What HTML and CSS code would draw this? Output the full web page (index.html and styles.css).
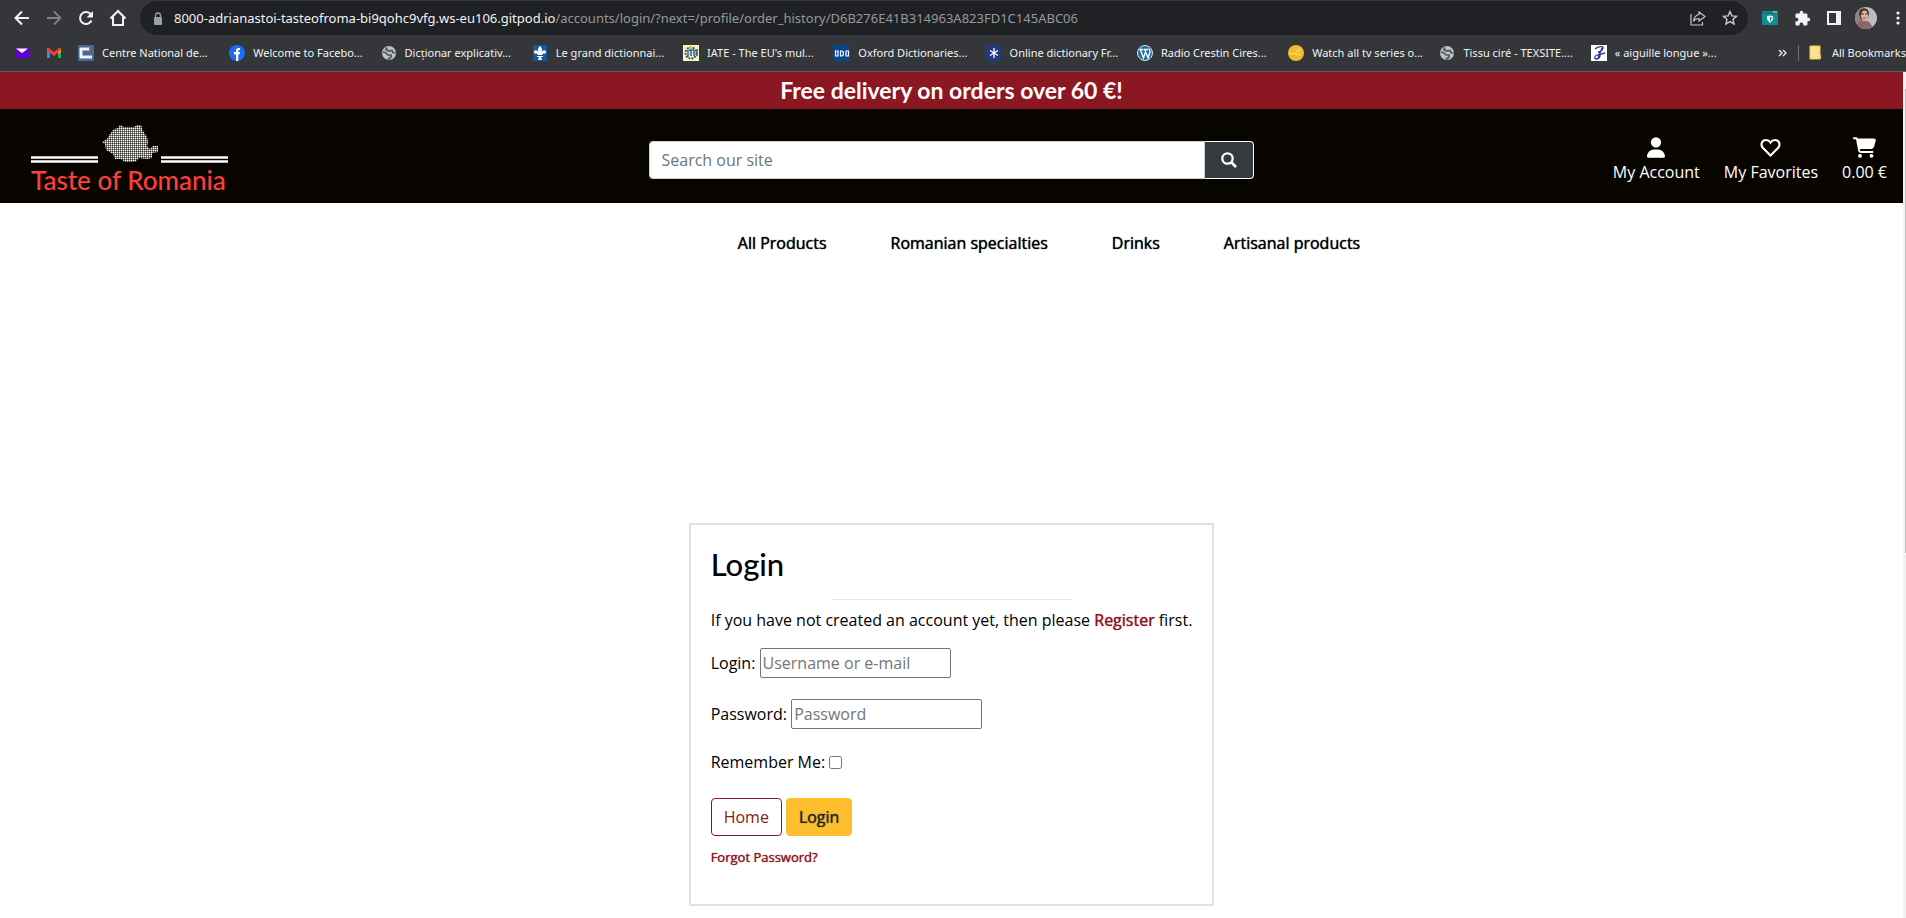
FILE: index.html
```html
<!DOCTYPE html>
<html lang="en">
<head>
<meta charset="utf-8">
<title>Taste of Romania</title>
<link rel="stylesheet" href="styles.css">
</head>
<body>
<div class="browser">
  <div class="toolbar">
    <button class="tool" aria-label="Back"><svg width="16" height="16" viewBox="0 0 16 16"><path d="M15 8H2M8 1.500L1.500 8 8 14.500" fill="none" stroke="#f1f3f4" stroke-width="2"/></svg></button>
    <button class="tool" aria-label="Forward"><svg width="16" height="16" viewBox="0 0 16 16"><path d="M1 8h13M8 1.500L14.500 8 8 14.500" fill="none" stroke="#808286" stroke-width="1.800"/></svg></button>
    <button class="tool" aria-label="Reload"><svg width="16" height="16" viewBox="0 0 16 16"><path d="M13.500 10.500A6 6 0 1 1 12.300 3.800L14 5.500" fill="none" stroke="#f1f3f4" stroke-width="2"/><path d="M15 1v6.500H8.500z" fill="#f1f3f4"/></svg></button>
    <button class="tool" aria-label="Home"><svg width="18" height="18" viewBox="0 0 18 18"><path d="M1.500 9.500L9 2l7.500 7.500M4 8v8h10V8" fill="none" stroke="#f1f3f4" stroke-width="2"/></svg></button>
    <div class="address">
      <svg class="lock" width="10" height="13" viewBox="0 0 10 13"><rect x="1" y="5" width="8" height="8" rx="1" fill="#9aa0a6"/><path d="M2.500 5V3.500a2.500 2.500 0 0 1 5 0V5" fill="none" stroke="#9aa0a6" stroke-width="1.300"/></svg>
      <div class="url" role="textbox" aria-label="Address">8000-adrianastoi-tasteofroma-bi9qohc9vfg.ws-eu106.gitpod.io<span class="path">/accounts/login/?next=/profile/order_history/D6B276E41B314963A823FD1C145ABC06</span></div>
      <button class="tool" aria-label="Share"><svg width="16" height="16" viewBox="0 0 16 16"><path d="M1 4v11h11.500v-3M9 2l6 4.500L9 11V8.500C6 8.500 4.500 9.500 3.500 11.500 4 7.500 6 5 9 4.500z" fill="none" stroke="#c4c7c9" stroke-width="1.200"/></svg></button>
      <button class="tool" aria-label="Bookmark this page"><svg width="16" height="16" viewBox="0 0 16 16"><path d="M8 1.500l1.900 4.400 4.700.4-3.600 3.100 1.100 4.700L8 11.600l-4.100 2.500L5 9.400 1.400 6.300l4.700-.4z" fill="none" stroke="#c4c7c9" stroke-width="1.400"/></svg></button>
    </div>
    <button class="tool" aria-label="Ad blocker"><svg width="16" height="14" viewBox="0 0 16 14"><rect width="16" height="14" fill="#138b95"/><path d="M0 2h16" stroke="#1b5d68"/><path d="M11 1h4" stroke="#b9e4e5"/><path d="M5 5l3-.5 3 .5v3.500L8 12 5 8.500z" fill="#e6f4f2"/><path d="M8 6v4.500L9.500 8V6z" fill="#138b95"/></svg></button>
    <button class="tool" aria-label="Extensions"><svg width="17" height="17" viewBox="0 0 24 24"><path d="M20.500 11H19V7a2 2 0 0 0-2-2h-4V3.500a2.500 2.500 0 0 0-5 0V5H4a2 2 0 0 0-2 2v3.800h1.500a2.700 2.700 0 0 1 0 5.400H2V20a2 2 0 0 0 2 2h3.800v-1.500a2.700 2.700 0 0 1 5.400 0V22H17a2 2 0 0 0 2-2v-4h1.500a2.500 2.500 0 0 0 0-5z" fill="#f1f3f4"/></svg></button>
    <button class="tool" aria-label="Side panel"><svg width="14" height="14" viewBox="0 0 14 14"><path d="M0 0h14v14H0zM2 2v10h7V2z" fill="#f1f3f4" fill-rule="evenodd"/></svg></button>
    <button class="tool" aria-label="Profile"><svg width="22" height="22" viewBox="0 0 22 22"><clipPath id="face"><circle cx="11" cy="11" r="11"/></clipPath><g clip-path="url(#face)"><path d="M0 0h22v22H0z" fill="#b9bdbb"/><path d="M0 0h7v22H0z" fill="#8e8480"/><path d="M4 7c0-7 9-8 10-1l-1 5-7 2z" fill="#49322c"/><ellipse cx="9.500" cy="8.500" rx="3.500" ry="5" fill="#e2b6a3"/><path d="M6 7h3M10 7h3" stroke="#433836"/><path d="M8 11h3" stroke="#a43a43"/><path d="M1 22c0-8 5-9 8-8 4-1 7 2 9 8z" fill="#95636b"/></g></svg></button>
    <button class="tool menu" aria-label="Menu"><svg width="4" height="14" viewBox="0 0 4 14"><g fill="#f1f3f4"><circle cx="2" cy="2" r="1.600"/><circle cx="2" cy="7" r="1.600"/><circle cx="2" cy="12" r="1.600"/></g></svg></button>
  </div>
  <nav class="bookmarks" aria-label="Bookmarks">
    <a class="mark short" href="#" aria-label="Mail"><svg width="16" height="16" viewBox="0 0 16 16"><path d="M1 3h14v10H1z" fill="#5f01d1"/><path d="M2 3.500h12L8 8z" fill="#fff"/></svg></a>
    <a class="mark short" href="#" aria-label="Gmail"><svg width="16" height="16" viewBox="0 0 16 16"><path d="M1 4h3v9H1z" fill="#4285f4"/><path d="M12 4h3v9h-3z" fill="#34a853"/><path d="M12 4l3-1v4l-3 2z" fill="#fbbc04"/><path d="M1 3l2 0 5 4 5-4h2v2L8 11 1 5.500z" fill="#ea4335"/></svg></a>
    <div class="marklist">
      <a class="mark" href="#"><svg width="16" height="16" viewBox="0 0 16 16"><path d="M0 0h16v16H0z" fill="#44699c"/><path d="M12 4H3v8h11" fill="none" stroke="#f2f2f2" stroke-width="3" stroke-linejoin="round"/><path d="M11 2.500h3v3h-3z" fill="#d54343"/></svg>Centre National de...</a>
      <a class="mark" href="#"><svg width="16" height="16" viewBox="0 0 16 16"><circle cx="8" cy="8" r="8" fill="#1b6ef3"/><path d="M7 16V9.500H5V7h2V5.500C7 3.500 8 2.700 11 3v2C9.500 5 9.300 5.300 9.300 7H11l-.4 2.500H9.300V16z" fill="#fff"/></svg>Welcome to Facebo...</a>
      <a class="mark" href="#"><svg width="16" height="16" viewBox="0 0 16 16"><circle cx="8" cy="8" r="7" fill="#bdc1c6"/><path d="M2 7l3 1 2 2 3 0 0 2-3 2.500M6 2.500L5 4.500 8 6l3-.5 1 2 2.500.5" fill="none" stroke="#515458" stroke-width="1.700"/></svg>Dicționar explicativ...</a>
      <a class="mark" href="#"><svg width="16" height="16" viewBox="0 0 16 16"><path d="M1 0h14v16H1z" fill="#15599b"/><path d="M8 1c3 3 2 5 1 7 1-3 5-4 5-1 0 2-2 2-2 1l-2 2H6L4 8c0 1-2 1-2-1 0-3 4-2 5 1C6 6 5 4 8 1zM5 11h6v1H9l1 3H6l1-3H5z" fill="#fff"/></svg>Le grand dictionnai...</a>
      <a class="mark" href="#"><svg width="16" height="16" viewBox="0 0 16 16"><path d="M0 0h16v16H0z" fill="#fbf7bd"/><circle cx="8" cy="8" r="5.500" fill="none" stroke="#315c91" stroke-width="2" stroke-dasharray="2 1"/><path d="M5 5v7M6 5h5M8 5v6M11 5v6M14 4v7" stroke="#315c91" stroke-width="1.500"/><path d="M6 1h3v2H6z" fill="#e4c929"/></svg>IATE - The EU's mul...</a>
      <a class="mark" href="#"><svg width="16" height="16" viewBox="0 0 16 16"><path d="M0 0h16v16H0z" fill="#07478e"/><path d="M1.500 6h2.500v5H1.500zM6.500 6H8l1.300 1v3L8 11H6.500zM12 6h2.500v5H12z" fill="none" stroke="#fff" stroke-width="1.200"/></svg>Oxford Dictionaries...</a>
      <a class="mark" href="#"><svg width="16" height="16" viewBox="0 0 16 16"><rect width="15" height="16" rx="2" fill="#213a79"/><path d="M8 3v10M4 5.500l8 5M12 5.500l-8 5" stroke="#fff" stroke-width="1.300"/></svg>Online dictionary Fr...</a>
      <a class="mark" href="#"><svg width="16" height="16" viewBox="0 0 16 16"><circle cx="8" cy="8" r="7.500" fill="#16739f" stroke="#d7e7ee"/><path d="M2.500 4.500h4M3.500 5l3 8L8.500 7M7 4.500h4M8 5l3 8 2-6c.5-2-1-2-1-3.500" fill="none" stroke="#fff" stroke-width="1.400"/></svg>Radio Crestin Cires...</a>
      <a class="mark" href="#"><svg width="16" height="16" viewBox="0 0 16 16"><circle cx="8" cy="8" r="8" fill="#f4b92a"/><path d="M1 8l2 1 2-1 2 1 4-5M7 9l4 1 2-2M9 7l4-3" fill="none" stroke="#fff0ba" stroke-dasharray="2 1"/></svg>Watch all tv series o...</a>
      <a class="mark" href="#"><svg width="16" height="16" viewBox="0 0 16 16"><circle cx="8" cy="8" r="7" fill="#bdc1c6"/><path d="M2 7l3 1 2 2 3 0 0 2-3 2.500M6 2.500L5 4.500 8 6l3-.5 1 2 2.500.5" fill="none" stroke="#515458" stroke-width="1.700"/></svg>Tissu ciré - TEXSITE....</a>
      <a class="mark" href="#"><svg width="16" height="16" viewBox="0 0 16 16"><path d="M0 0h16v16H0z" fill="#fff"/><path d="M4 4c3-3 9-3 8-1-1 3-3 4-5 4 3 0 3 6-1 7-3 0-3-3 0-4l8-2M11 3L7 13" fill="none" stroke="#2b3b97" stroke-width="1.300"/></svg>« aiguille longue »...</a>
    </div>
    <button class="more" aria-label="More bookmarks"><svg width="9" height="8" viewBox="0 0 9 8"><path d="M1 1l3 3-3 3M5 1l3 3-3 3" fill="none" stroke="#e8eaed" stroke-width="1.400"/></svg></button>
    <a class="mark all" href="#"><svg width="13" height="15" viewBox="0 0 13 15"><path d="M1 1h10v13H1z" fill="#fde293" stroke="#f5cc52"/><path d="M10 10h2v4h-2z" fill="#f5cc52"/></svg>All Bookmarks</a>
  </nav>
</div>
<div class="viewport">
  <div class="page">
    <div class="banner">Free delivery on orders over 60 €!</div>
    <header class="header">
      <a class="logo" href="#" aria-label="Taste of Romania">
        <svg width="197" height="40" viewBox="0 0 197 40"><defs><pattern id="dots" width="2" height="2" patternUnits="userSpaceOnUse"><path d="M0 0h2v2H0z" fill="#85847f"/><path d="M0 0h1v1H0z" fill="#fff"/><path d="M1 1h1v1H1z" fill="#3a3935"/></pattern></defs><path d="M71 18l5-3 3-5 4-5 4-1 2-3 4 2h10l3-2h4l2 6 4 6 1 5-1 4 3 3 3-3h5v6l-6 1v5l-5 1-8-1-4 4-10 0-4-3h-6l-2-5-7-4-1-6z" fill="url(#dots)"/><path d="M0 33.500h67M0 37.500h67M130 33.500h67M130 37.500h67" stroke="#fff" stroke-width="2.500"/></svg>
        <span class="name">Taste of Romania</span>
      </a>
      <form class="search">
        <input type="text" placeholder="Search our site" aria-label="Search our site">
        <button type="button" aria-label="Search"><svg width="16" height="16" viewBox="0 0 16 16"><circle cx="6.500" cy="6.500" r="5.200" fill="none" stroke="#fff" stroke-width="2.300"/><path d="M10 10l5 5" stroke="#fff" stroke-width="2.600"/></svg></button>
      </form>
      <div class="account">
        <a href="#"><svg width="18" height="21" viewBox="0 0 448 512"><path d="M224 256a128 128 0 1 0 0-256 128 128 0 1 0 0 256zm-46 48C80 304 0 384 0 482c0 17 13 30 30 30h388c17 0 30-13 30-30 0-98-80-178-178-178z" fill="#fff"/></svg>My Account</a>
        <a href="#"><svg width="21" height="21" viewBox="0 0 21 21"><path d="M10.500 18.500L3 11C0 7.500 2 3 6 3c2 0 3.500 1 4.500 2.500C11.500 4 13 3 15 3c4 0 6 4.500 3 8z" fill="none" stroke="#fff" stroke-width="2.200"/></svg>My Favorites</a>
        <a href="#"><svg width="23" height="21" viewBox="0 0 576 512"><path d="M0 24C0 11 11 0 24 0h46c22 0 41 13 51 32h411c26 0 45 25 38 50l-41 152c-9 36-41 61-78 61H171l5 29c2 11 12 20 24 20h288a24 24 0 0 1 0 48H200c-35 0-65-25-71-59L77 54c0-3-3-6-7-6H24C11 48 0 37 0 24z" fill="#fff"/><circle cx="176" cy="464" r="48" fill="#fff"/><circle cx="464" cy="464" r="48" fill="#fff"/></svg>0.00 €</a>
      </div>
    </header>
    <nav class="menubar" aria-label="Main">
      <a href="#">All Products</a><a href="#">Romanian specialties</a><a href="#">Drinks</a><a href="#">Artisanal products</a>
    </nav>
    <main class="card">
      <h1>Login</h1>
      <hr>
      <p>If you have not created an account yet, then please <a class="strong" href="#">Register</a> first.</p>
      <form>
        <div class="field"><label for="login">Login:</label> <input id="login" type="text" placeholder="Username or e-mail"></div>
        <div class="field"><label for="password">Password:</label> <input id="password" type="password" placeholder="Password"></div>
        <div class="field check"><label for="remember">Remember Me:</label><input id="remember" type="checkbox"></div>
        <div class="actions"><a class="btn outline" href="#">Home</a><button class="btn solid" type="button">Login</button></div>
        <a class="forgot" href="#">Forgot Password?</a>
      </form>
    </main>
  </div>
  <div class="scrollbar"><div class="thumb"></div></div>
</div>
</body>
</html>
```
FILE: styles.css
```css
* { box-sizing: border-box; }
html, body { height: 100%; }
body {
  margin: 0;
  display: flex;
  flex-direction: column;
  overflow: hidden;
  background: #fff;
  color: #000;
  font: 400 16px/24px "Open Sans", sans-serif;
}
a { color: inherit; text-decoration: none; }
button { font: inherit; cursor: pointer; }

.browser {
  background: #35363a;
  border-bottom: 1px solid #5b5c60;
  color: #f1f3f4;
  font-family: "Noto Sans", sans-serif;
}
.toolbar {
  display: flex;
  align-items: center;
  height: 36px;
  padding-left: 6px;
}
.tool {
  display: flex;
  flex: none;
  align-items: center;
  justify-content: center;
  width: 32px;
  height: 32px;
  padding: 0;
  border: 0;
  background: none;
}
.menu { width: 24px; padding-left: 8px; }
.address {
  display: flex;
  flex: 1;
  align-items: center;
  height: 34px;
  margin: 0 6px;
  padding: 0 2px 0 13px;
  border-radius: 17px;
  background: #202124;
}
.url { flex: 1; margin-left: 11px; font-size: 13px; white-space: nowrap; }
.path { color: #96999d; }
.bookmarks {
  display: flex;
  align-items: center;
  height: 35px;
  padding: 0 0 2px 14px;
  font-size: 11px;
}
.mark { display: flex; align-items: center; gap: 8px; white-space: nowrap; }
.mark svg { flex: none; }
.short { width: 32px; }
.marklist { display: grid; flex: 1; grid-template-columns: repeat(11, 1fr); }
.more { display: flex; padding: 0 11px 0 36px; border: 0; background: none; }
.all { padding-left: 10px; border-left: 1px solid #6b6c70; height: 16px; gap: 10px; }

.viewport { display: flex; flex: 1; min-height: 0; }
.page { flex: 1; min-width: 0; }
.scrollbar { width: 3px; padding: 17px 0 0 2px; background: #f1f1f1; }
.thumb { height: 56%; background: #c1c1c1; }

.banner {
  height: 37px;
  background: #8a1721;
  color: #fff;
  text-align: center;
  font: 700 23px/36px Lato, sans-serif;
}
.header {
  display: grid;
  grid-template-columns: 1fr 605px 1fr;
  align-items: center;
  height: 94px;
  padding: 0 16px 0 31px;
  background: #080500;
  color: #fff;
}
.logo { display: flex; flex-direction: column; width: max-content; padding-top: 8px; }
.name { color: #ff3f3c; font: 500 26px/32px Lato, sans-serif; }
.search { display: flex; margin-top: 8px; margin-left: -8px; margin-right: 8px; }
.search input {
  flex: 1;
  height: 38px;
  padding: 6px 12px;
  border: 1px solid #ced4da;
  border-radius: 4px 0 0 4px;
  font: inherit;
}
.search input::placeholder { color: #6c757d; }
.search button {
  display: flex;
  align-items: center;
  justify-content: center;
  width: 49px;
  border: 1px solid #f8f9fa;
  border-left: 0;
  border-radius: 0 4px 4px 0;
  background: #343a40;
}
.account { display: flex; gap: 24px; justify-content: flex-end; padding-top: 8px; }
.account a { display: flex; flex-direction: column; align-items: center; gap: 2px; }

.menubar {
  display: flex;
  justify-content: center;
  gap: 64px;
  padding: 28px 0 0 195px;
  text-shadow: 0 0 1px #000;
}

.card {
  width: max-content;
  margin: 268px auto 0;
  padding: 20px 20px 35px;
  border: 2px solid #dee2e6;
}
h1 { margin: 0; font: 500 31px/38px Lato, sans-serif; }
hr { width: 50%; margin: 16px auto 8px; border: 0; border-top: 1px solid #e5e5e5; }
p { margin: 0 0 16px; }
.strong { color: #8a1721; text-shadow: 0 0 1px #8a1721; }
.field { margin-bottom: 21px; }
.field input[type="text"], .field input[type="password"] {
  width: 191px;
  height: 30px;
  padding: 1px 2px;
  border: 1px solid #767676;
  border-radius: 2px;
  font: inherit;
}
.field input::placeholder { color: #757575; }
.check { margin-bottom: 24px; }
.check input { width: 13px; height: 13px; margin: 0 0 0 4px; vertical-align: -1px; }
.actions { display: flex; gap: 4px; margin-bottom: 8px; }
.btn { padding: 6px 12px; border: 1px solid #8a1721; border-radius: 4px; }
.outline { color: #8a1721; }
.solid { border-color: #fdbf2d; background: #fdbf2d; color: #212529; text-shadow: 0 0 1px #212529; }
.forgot { color: #8a1721; font-size: 13px; text-shadow: 0 0 1px #8a1721; }
```
